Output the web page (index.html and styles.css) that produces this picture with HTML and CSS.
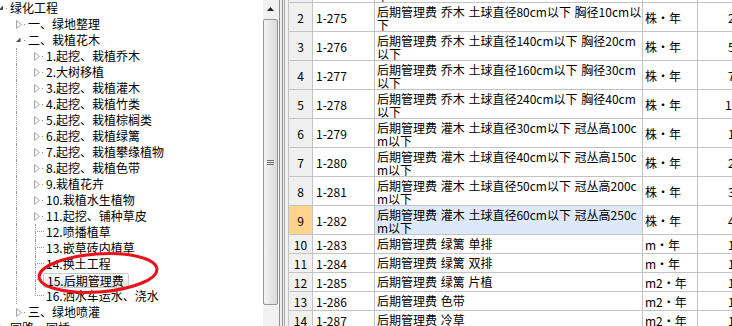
FILE: index.html
```html
<!DOCTYPE html>
<html lang="zh-CN">
<head>
<meta charset="utf-8">
<title>绿化工程</title>
<link rel="stylesheet" href="styles.css">
</head>
<body>
<div class="app">
  <div class="tree-pane">
    <div class="tree">
      <div class="node"><span class="tg"><svg width="6" height="6" viewBox="0 0 6 6"><path d="M5 0.5V5H0.5z" fill="#4a4a4a"/></svg><i class="dot"></i></span><span class="lbl">绿化工程</span></div>
      <div class="node"><span class="ind"></span><span class="tg"><svg width="6" height="9" viewBox="0 0 6 9"><path d="M.5 .5 5.5 4.5 .5 8.5z" fill="#fff" stroke="#a3a3a3"/></svg><i class="dot"></i></span><span class="lbl">一、绿地整理</span></div>
      <div class="node"><span class="ind"></span><span class="tg"><svg width="6" height="6" viewBox="0 0 6 6"><path d="M4.5 0.5V5H0z" fill="#4a4a4a"/></svg><i class="dot"></i></span><span class="lbl">二、栽植花木</span></div>
      <div class="node"><span class="ind"></span><span class="ind guide"></span><span class="tg"><svg width="6" height="9" viewBox="0 0 6 9"><path d="M.5 .5 5.5 4.5 .5 8.5z" fill="#fff" stroke="#a3a3a3"/></svg><i class="dot"></i></span><span class="lbl">1.起挖、栽植乔木</span></div>
      <div class="node"><span class="ind"></span><span class="ind guide"></span><span class="tg"><svg width="6" height="9" viewBox="0 0 6 9"><path d="M.5 .5 5.5 4.5 .5 8.5z" fill="#fff" stroke="#a3a3a3"/></svg><i class="dot"></i></span><span class="lbl">2.大树移植</span></div>
      <div class="node"><span class="ind"></span><span class="ind guide"></span><span class="tg"><svg width="6" height="9" viewBox="0 0 6 9"><path d="M.5 .5 5.5 4.5 .5 8.5z" fill="#fff" stroke="#a3a3a3"/></svg><i class="dot"></i></span><span class="lbl">3.起挖、栽植灌木</span></div>
      <div class="node"><span class="ind"></span><span class="ind guide"></span><span class="tg"><svg width="6" height="9" viewBox="0 0 6 9"><path d="M.5 .5 5.5 4.5 .5 8.5z" fill="#fff" stroke="#a3a3a3"/></svg><i class="dot"></i></span><span class="lbl">4.起挖、栽植竹类</span></div>
      <div class="node"><span class="ind"></span><span class="ind guide"></span><span class="tg"><svg width="6" height="9" viewBox="0 0 6 9"><path d="M.5 .5 5.5 4.5 .5 8.5z" fill="#fff" stroke="#a3a3a3"/></svg><i class="dot"></i></span><span class="lbl">5.起挖、栽植棕榈类</span></div>
      <div class="node"><span class="ind"></span><span class="ind guide"></span><span class="tg"><svg width="6" height="9" viewBox="0 0 6 9"><path d="M.5 .5 5.5 4.5 .5 8.5z" fill="#fff" stroke="#a3a3a3"/></svg><i class="dot"></i></span><span class="lbl">6.起挖、栽植绿篱</span></div>
      <div class="node"><span class="ind"></span><span class="ind guide"></span><span class="tg"><svg width="6" height="9" viewBox="0 0 6 9"><path d="M.5 .5 5.5 4.5 .5 8.5z" fill="#fff" stroke="#a3a3a3"/></svg><i class="dot"></i></span><span class="lbl">7.起挖、栽植攀缘植物</span></div>
      <div class="node"><span class="ind"></span><span class="ind guide"></span><span class="tg"><svg width="6" height="9" viewBox="0 0 6 9"><path d="M.5 .5 5.5 4.5 .5 8.5z" fill="#fff" stroke="#a3a3a3"/></svg><i class="dot"></i></span><span class="lbl">8.起挖、栽植色带</span></div>
      <div class="node"><span class="ind"></span><span class="ind guide"></span><span class="tg"><svg width="6" height="9" viewBox="0 0 6 9"><path d="M.5 .5 5.5 4.5 .5 8.5z" fill="#fff" stroke="#a3a3a3"/></svg><i class="dot"></i></span><span class="lbl">9.栽植花卉</span></div>
      <div class="node"><span class="ind"></span><span class="ind guide"></span><span class="tg"><svg width="6" height="9" viewBox="0 0 6 9"><path d="M.5 .5 5.5 4.5 .5 8.5z" fill="#fff" stroke="#a3a3a3"/></svg><i class="dot"></i></span><span class="lbl">10.栽植水生植物</span></div>
      <div class="node"><span class="ind"></span><span class="ind guide"></span><span class="tg"><svg width="6" height="9" viewBox="0 0 6 9"><path d="M.5 .5 5.5 4.5 .5 8.5z" fill="#fff" stroke="#a3a3a3"/></svg><i class="dot"></i></span><span class="lbl">11.起挖、铺种草皮</span></div>
      <div class="node"><span class="ind"></span><span class="ind guide"></span><span class="conn"><i class="t"></i><i class="b"></i></span><span class="lbl">12.喷播植草</span></div>
      <div class="node"><span class="ind"></span><span class="ind guide"></span><span class="conn"><i class="t"></i><i class="b"></i></span><span class="lbl">13.嵌草砖内植草</span></div>
      <div class="node"><span class="ind"></span><span class="ind guide"></span><span class="conn"><i class="t"></i><i class="b"></i></span><span class="lbl">14.换土工程</span></div>
      <div class="node"><span class="ind"></span><span class="ind guide"></span><span class="conn"><i class="t"></i><i class="b"></i></span><span class="lbl sel">15.后期管理费</span></div>
      <div class="node"><span class="ind"></span><span class="ind guide"></span><span class="conn last"><i class="t"></i><i class="b"></i></span><span class="lbl">16.洒水车运水、浇水</span></div>
      <div class="node"><span class="ind"></span><span class="tg"><svg width="6" height="9" viewBox="0 0 6 9"><path d="M.5 .5 5.5 4.5 .5 8.5z" fill="#fff" stroke="#a3a3a3"/></svg><i class="dot"></i></span><span class="lbl">三、绿地喷灌</span></div>
      <div class="node"><span class="tg"><svg width="6" height="9" viewBox="0 0 6 9"><path d="M.5 .5 5.5 4.5 .5 8.5z" fill="#fff" stroke="#a3a3a3"/></svg><i class="dot"></i></span><span class="lbl">园路、园桥</span></div>
    </div>
    <svg class="circle" width="126" height="46" viewBox="0 0 126 46"><ellipse cx="62" cy="23" rx="59" ry="19" transform="rotate(-4 62 23)" fill="none" stroke="#e8121a" stroke-width="3"/></svg>
  </div>

  <div class="vscroll">
    <div class="arrow"><svg width="7" height="4" viewBox="0 0 7 4"><path d="M0 4 3.5 0 7 4z" fill="#222"/></svg></div>
    <div class="thumb"><div class="grip"></div></div>
  </div>

  <div class="splitter"></div>

  <div class="grid-pane">
    <div class="grid">
      <div class="row"><div class="cell num">1</div><div class="cell code">1-274</div><div class="cell desc">后期管理费 乔木 土球直径60cm以下 胸径8cm以<br>下</div><div class="cell unit">株・年</div><div class="cell amt">1</div></div>
      <div class="row"><div class="cell num">2</div><div class="cell code">1-275</div><div class="cell desc">后期管理费 乔木 土球直径80cm以下 胸径10cm以<br>下</div><div class="cell unit">株・年</div><div class="cell amt">2</div></div>
      <div class="row"><div class="cell num">3</div><div class="cell code">1-276</div><div class="cell desc">后期管理费 乔木 土球直径140cm以下 胸径20cm<br>以下</div><div class="cell unit">株・年</div><div class="cell amt">5</div></div>
      <div class="row"><div class="cell num">4</div><div class="cell code">1-277</div><div class="cell desc">后期管理费 乔木 土球直径160cm以下 胸径30cm<br>以下</div><div class="cell unit">株・年</div><div class="cell amt">7</div></div>
      <div class="row"><div class="cell num">5</div><div class="cell code">1-278</div><div class="cell desc">后期管理费 乔木 土球直径240cm以下 胸径40cm<br>以下</div><div class="cell unit">株・年</div><div class="cell amt wide">10</div></div>
      <div class="row"><div class="cell num">6</div><div class="cell code">1-279</div><div class="cell desc">后期管理费 灌木 土球直径30cm以下 冠丛高100c<br>m以下</div><div class="cell unit">株・年</div><div class="cell amt">1</div></div>
      <div class="row"><div class="cell num">7</div><div class="cell code">1-280</div><div class="cell desc">后期管理费 灌木 土球直径40cm以下 冠丛高150c<br>m以下</div><div class="cell unit">株・年</div><div class="cell amt">2</div></div>
      <div class="row"><div class="cell num">8</div><div class="cell code">1-281</div><div class="cell desc">后期管理费 灌木 土球直径50cm以下 冠丛高200c<br>m以下</div><div class="cell unit">株・年</div><div class="cell amt">3</div></div>
      <div class="row sel"><div class="cell num">9</div><div class="cell code">1-282</div><div class="cell desc">后期管理费 灌木 土球直径60cm以下 冠丛高250c<br>m以下</div><div class="cell unit">株・年</div><div class="cell amt">4</div></div>
      <div class="row s"><div class="cell num">10</div><div class="cell code">1-283</div><div class="cell desc">后期管理费 绿篱 单排</div><div class="cell unit">m・年</div><div class="cell amt">1</div></div>
      <div class="row s"><div class="cell num">11</div><div class="cell code">1-284</div><div class="cell desc">后期管理费 绿篱 双排</div><div class="cell unit">m・年</div><div class="cell amt">1</div></div>
      <div class="row s"><div class="cell num">12</div><div class="cell code">1-285</div><div class="cell desc">后期管理费 绿篱 片植</div><div class="cell unit">m2・年</div><div class="cell amt">1</div></div>
      <div class="row s"><div class="cell num">13</div><div class="cell code">1-286</div><div class="cell desc">后期管理费 色带</div><div class="cell unit">m2・年</div><div class="cell amt">1</div></div>
      <div class="row s"><div class="cell num">14</div><div class="cell code">1-287</div><div class="cell desc">后期管理费 冷草</div><div class="cell unit">m2・年</div><div class="cell amt">1</div></div>
    </div>
  </div>
</div>
</body>
</html>
```
FILE: styles.css
```css
* { box-sizing: border-box; }
html, body { margin: 0; padding: 0; }
body {
  width: 732px;
  height: 326px;
  overflow: hidden;
  background: #fff;
  color: #000;
  font-family: "Noto Sans CJK SC", "Noto Sans", sans-serif;
  font-size: 12px;
}
.app { display: flex; height: 326px; }

/* ---------- tree ---------- */
.tree-pane {
  width: 263px;
  flex: none;
  position: relative;
  overflow: hidden;
  background: #fff;
}
.tree { margin-left: -2px; }
.node {
  display: flex;
  align-items: center;
  height: 16px;
  line-height: 16px;
  white-space: nowrap;
}
.ind { width: 18px; flex: none; align-self: stretch; }
.ind.guide { border-left: 1px dotted #9a9a9a; }
.tg { width: 12px; flex: none; display: flex; align-items: center; }
.tg svg { display: block; flex: none; }
.dot {
  display: block;
  width: 1px;
  height: 1px;
  background: #8a8a8a;
  margin-left: 2px;
}
.conn {
  width: 11px;
  margin-left: 1px;
  flex: none;
  align-self: stretch;
  display: flex;
  flex-direction: column;
}
.conn .t {
  display: block;
  height: 8px;
  width: 9px;
  border-left: 1px dotted #9a9a9a;
  border-bottom: 1px dotted #9a9a9a;
}
.conn .b { display: block; flex: 1; border-left: 1px dotted #9a9a9a; }
.conn.last .b { border-left: none; }
.lbl { display: block; }
.lbl.sel {
  margin-left: -3px;
  height: 15px;
  line-height: 13px;
  padding: 0 4px 0 3px;
  border: 1px solid #c9c9c9;
  border-radius: 2px;
  background: linear-gradient(#fdfdfd, #e4e4e4);
}
.circle {
  position: absolute;
  left: 36px;
  top: 250px;
}

/* ---------- scrollbar ---------- */
.vscroll {
  width: 16px;
  flex: none;
  background: #f1f1f1;
  display: flex;
  flex-direction: column;
}
.arrow {
  height: 17px;
  display: flex;
  align-items: center;
  justify-content: center;
  padding-right: 1px;
}
.arrow svg { display: block; }
.thumb {
  margin-top: 2px;
  width: 15px;
  height: 286px;
  border: 1px solid #979797;
  border-radius: 2px;
  background: linear-gradient(to right, #f6f6f6, #e8e8e8 45%, #d9d9d9);
  display: flex;
  align-items: center;
  justify-content: center;
}
.grip {
  width: 7px;
  height: 5px;
  background: repeating-linear-gradient(#6a6a6a 0 1px, transparent 1px 2px);
}

/* ---------- splitter ---------- */
.splitter {
  width: 9px;
  flex: none;
  background: linear-gradient(to right,
    #8e8e8e 0 1px, #f0f0f0 1px 3px,
    #8e8e8e 3px 4px, #f0f0f0 4px 5px,
    #a8a8a8 5px 6px, #f0f0f0 6px 9px);
}

/* ---------- grid ---------- */
.grid-pane { flex: 1; overflow: hidden; background: #fff; }
.grid { margin-top: -26px; width: 560px; }
.row {
  display: grid;
  grid-template-columns: 25px 62px 268px 55px 150px;
  height: 29px;
}
.row.s { height: 19px; }
.cell {
  border-right: 1px solid #c3c3c3;
  border-bottom: 1px solid #c3c3c3;
  overflow: hidden;
  white-space: nowrap;
  padding: 0 2px;
  display: flex;
  align-items: center;
}
.num {
  border-left: 1px solid #c3c3c3;
  background: #f0f0f0;
  justify-content: center;
  padding: 0;
}
.code { padding-left: 3px; }
.desc {
  display: block;
  line-height: 13px;
  padding-top: 2px;
  word-spacing: 1px;
}
.row.s .desc { line-height: 18px; padding-top: 0; }
.amt { padding-left: 30px; }
.amt.wide { padding-left: 27px; }
.row.sel .num { background: #ffd48c; }
.row.sel .desc { background: #dde9f9; }
```
